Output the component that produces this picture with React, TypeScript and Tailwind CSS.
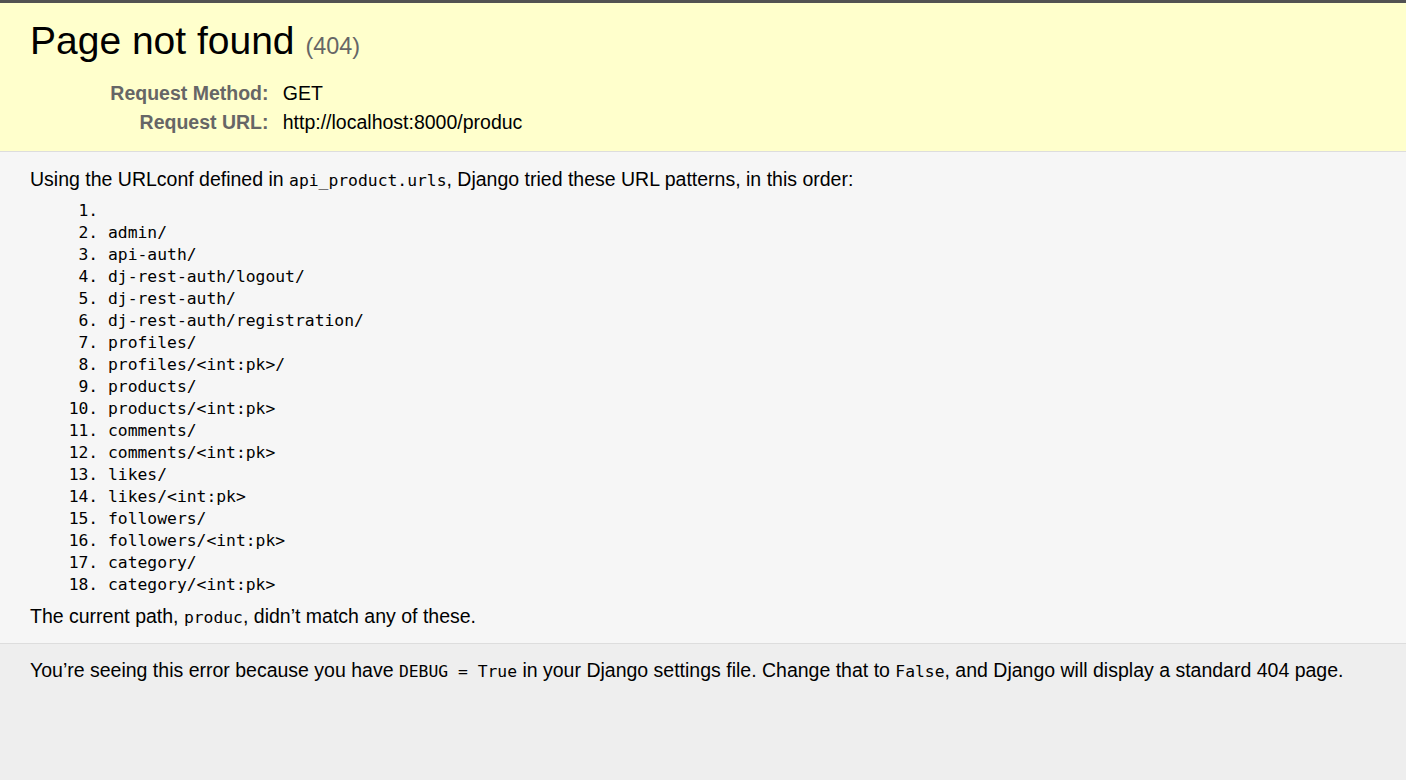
import React from "react";

const patterns = [
  "",
  "admin/",
  "api-auth/",
  "dj-rest-auth/logout/",
  "dj-rest-auth/",
  "dj-rest-auth/registration/",
  "profiles/",
  "profiles/<int:pk>/",
  "products/",
  "products/<int:pk>",
  "comments/",
  "comments/<int:pk>",
  "likes/",
  "likes/<int:pk>",
  "followers/",
  "followers/<int:pk>",
  "category/",
  "category/<int:pk>",
];

const mono = "font-['DejaVu_Sans_Mono',monospace] text-[16.35px]";

export default function App() {
  return (
    <div className="min-h-[780px] bg-[#eeeeee] text-black font-['Liberation_Sans',Arial,sans-serif] text-[19.5px] leading-[22.4px]">
      <div className="h-[3px] bg-[#525252]" />
      <div className="bg-[#ffffcc] border-b border-[#dddddd] px-[30px] pt-[15px] pb-[14px]">
        <h1 className="font-normal text-[39px] leading-[45px] mb-[15.6px]">
          Page not found <span className="text-[23.4px] leading-[27px] text-[#666666]">(404)</span>
        </h1>
        <table className="w-full border-collapse">
          <tbody>
            <tr>
              <th className="w-[234px] box-content text-right align-top text-[#666666] font-bold leading-[23px] pt-[3px] pb-[3px] pl-[4.5px] pr-[9.75px]">
                Request Method:
              </th>
              <td className="align-top leading-[23px] pt-[3px] pb-[3px] pl-[4.5px] pr-[4.5px]">GET</td>
            </tr>
            <tr>
              <th className="w-[234px] box-content text-right align-top text-[#666666] font-bold leading-[23px] pt-[3px] pb-[3px] pl-[4.5px] pr-[9.75px]">
                Request URL:
              </th>
              <td className="align-top leading-[23px] pt-[3px] pb-[3px] pl-[4.5px] pr-[4.5px]">http://localhost:8000/produc</td>
            </tr>
          </tbody>
        </table>
      </div>
      <div className="bg-[#f6f6f6] border-b border-[#dddddd] px-[30px] pt-[16px] pb-[14px]">
        <p>
          Using the URLconf defined in <code className={mono}>api_product.urls</code>, Django tried these URL
          patterns, in this order:
        </p>
        <ol className="list-decimal mx-[78px] mt-[8px] mb-[8.75px]">
          {patterns.map((p, i) => (
            <li key={i} className={`${mono} leading-[22px] h-[22px] whitespace-pre`}>
              {p}
            </li>
          ))}
        </ol>
        <p>
          The current path, <code className={mono}>produc</code>, didn’t match any of these.
        </p>
      </div>
      <div className="bg-[#eeeeee] px-[30px] py-[15px]">
        <p>
          You’re seeing this error because you have <code className={`${mono} whitespace-pre`}>DEBUG = True</code> in
          your Django settings file. Change that to <code className={mono}>False</code>, and Django will display a
          standard 404 page.
        </p>
      </div>
    </div>
  );
}
